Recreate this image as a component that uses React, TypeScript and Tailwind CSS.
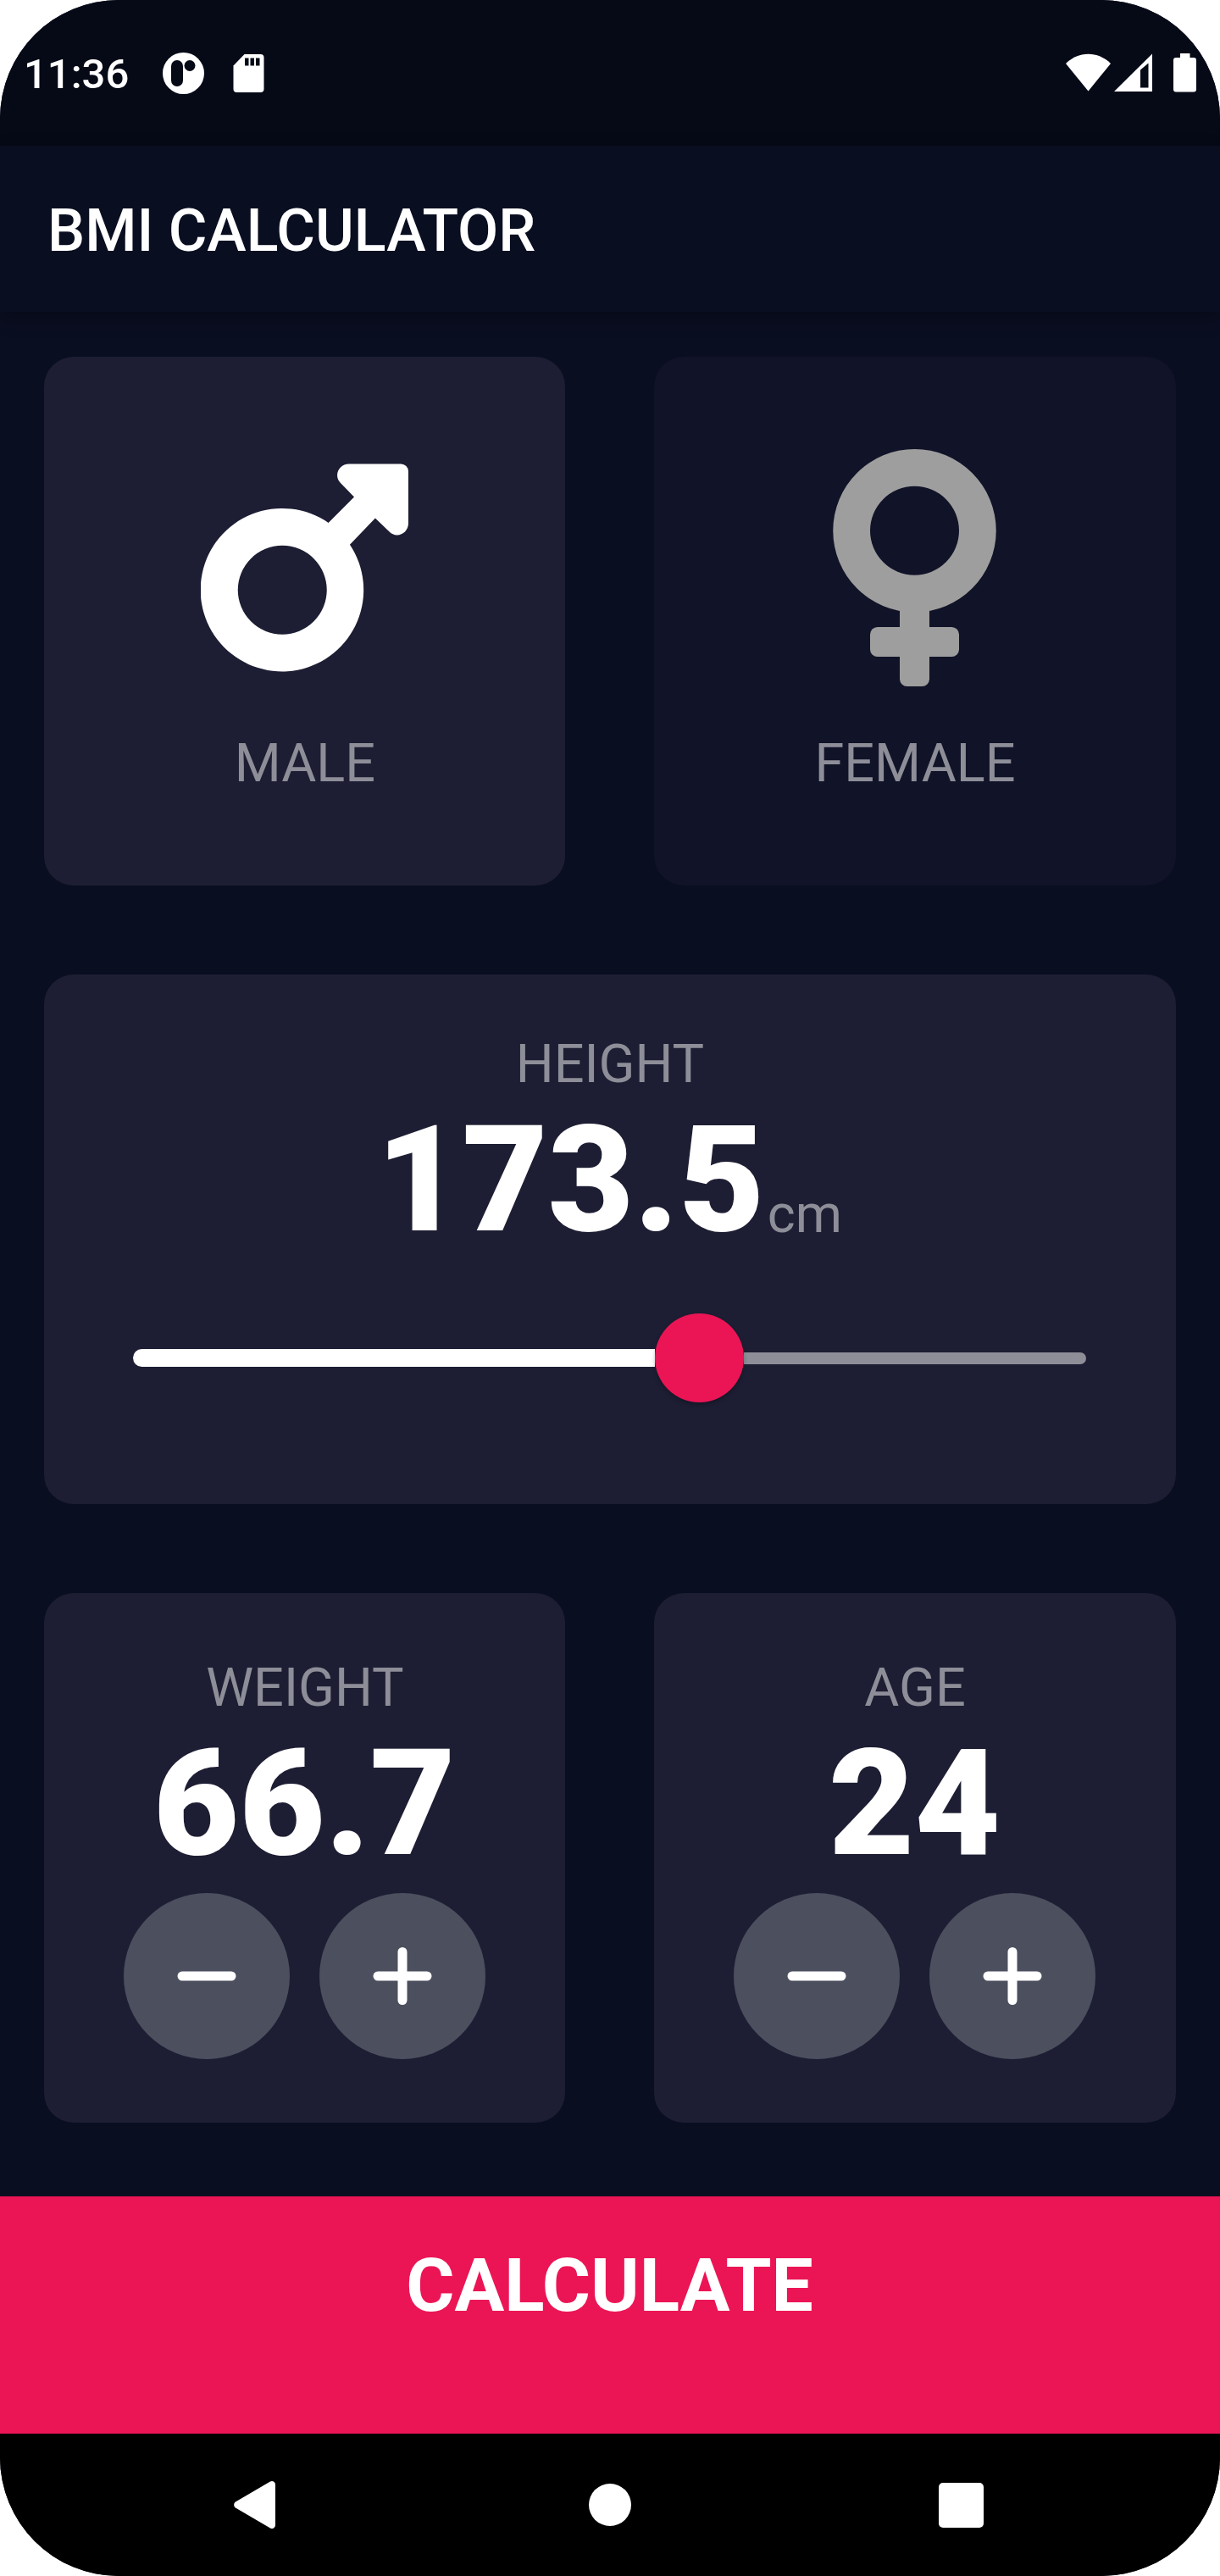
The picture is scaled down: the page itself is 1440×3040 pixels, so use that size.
import React, { useState } from "react";

const label = "text-[63px] leading-[74px] text-[#8d8e98] whitespace-nowrap";
const number = "text-[175px] leading-[205px] font-black text-white whitespace-nowrap";

function MaleIcon() {
  return (
    <svg className="h-[280px] w-[245px]" viewBox="0 -32 448 512" fill="currentColor">
      <path d="M320 0H432a16 16 0 0 1 16 16V128c0 14.4-11 25.5-24.5 25.5-6.5 0-12-2.8-16.5-7.2L376.5 117 321.7 174A176 176 0 1 1 275.4 127L331 71.500 301.700 41c-4.400-4.500-7.200-10-7.200-16.500C294.500 11 305.600 0 320 0ZM176 176a96 96 0 1 0 0 192 96 96 0 1 0 0-192Z" />
    </svg>
  );
}

function FemaleIcon() {
  return (
    <svg className="h-[280px] w-[193px]" viewBox="0 0 352 512" fill="currentColor">
      <path fillRule="evenodd" d="M176 0a176 176 0 1 0 0 352 176 176 0 1 0 0-352Zm0 80a96 96 0 1 1 0 192 96 96 0 1 1 0-192Z" />
      <rect x="80" y="384" width="192" height="64" rx="16" />
      <path d="M144 330H208V496a16 16 0 0 1-16 16H160a16 16 0 0 1-16-16Z" />
    </svg>
  );
}

function StatusBar() {
  return (
    <div className="flex h-[172px] shrink-0 items-start bg-[#060a17] pl-[28px] pr-[28px] pt-[57px] text-white">
      <span className="mt-[2px] w-[164px] text-[49px] font-medium leading-[58px]">11:36</span>
      <svg className="mt-[4px] h-[50px] w-[50px]" viewBox="0 0 50 50">
        <circle cx="24.500" cy="25.500" r="24.500" fill="white" />
        <rect x="10" y="10" width="14" height="31" rx="7" fill="#060a17" />
        <circle cx="32" cy="16.500" r="6.500" fill="#060a17" />
      </svg>
      <svg className="ml-[33px] mt-[7px] h-[45px] w-[37px]" viewBox="0 0 37 45">
        <path fill="white" d="M13.500 0H32.500a4 4 0 0 1 4 4V41a4 4 0 0 1-4 4H4.500a4 4 0 0 1-4-4V13.500Z" />
        <path fill="#060a17" d="M14 4.500h4.500v9h-4.500ZM20.500 4.500h4.500v9h-4.500ZM27 4.500h4.500v9h-4.500Z" />
      </svg>
      <div className="flex-1" />
      <svg className="mt-[6px] h-[46px] w-[155px]" viewBox="1257 63 155 46" fill="white">
        <path d="M1258 75C1273 60 1296 60 1311 75L1284.500 107.500Z" />
        <path fillRule="evenodd" d="M1315 108L1360 63.500V108ZM1346 82.500V103.500H1355.500V74.500Z" />
        <path d="M1393 63H1404.500V68H1409a3 3 0 0 1 3 3V105.500a3 3 0 0 1-3 3H1388a3 3 0 0 1-3-3V71a3 3 0 0 1 3-3H1393Z" />
      </svg>
    </div>
  );
}

function GenderCard({ name, active, onClick, children }: { name: string; active: boolean; onClick: () => void; children: React.ReactNode }) {
  return (
    <button
      onClick={onClick}
      className={`flex flex-col items-center justify-center gap-[54px] rounded-[35px] pt-[2px] ${active ? "bg-[#1d1e33] text-white" : "bg-[#111328] text-[#9e9e9e]"}`}
    >
      {children}
      <span className={label}>{name}</span>
    </button>
  );
}

function RoundButton({ plus, onClick }: { plus?: boolean; onClick: () => void }) {
  return (
    <button onClick={onClick} className="flex size-[196px] items-center justify-center rounded-full bg-[#4c4f5e]">
      <svg className="size-[70px]" viewBox="0 0 70 70" fill="white">
        <rect x="0.500" y="29.500" width="69" height="11" rx="5.500" />
        {plus && <rect x="29.500" y="1" width="11" height="68" rx="5.500" />}
      </svg>
    </button>
  );
}

function CounterCard({ name, value, onStep }: { name: string; value: string; onStep: (d: number) => void }) {
  return (
    <div className="flex flex-col items-center justify-center rounded-[35px] bg-[#1d1e33] pt-[1px]">
      <div className={label}>{name}</div>
      <div className={`${number} -mt-[3px] mb-[3px] pr-[1px]`}>{value}</div>
      <div className="flex gap-[35px]">
        <RoundButton onClick={() => onStep(-1)} />
        <RoundButton plus onClick={() => onStep(1)} />
      </div>
    </div>
  );
}

export default function App() {
  const [male, setMale] = useState(true);
  const [weight, setWeight] = useState(66.7);
  const [age, setAge] = useState(24);
  return (
    <div className="h-[3040px] w-[1440px] bg-white">
      <div className="flex h-full w-full flex-col overflow-hidden rounded-[140px] bg-[#0a0e21] font-['Roboto',sans-serif]">
        <StatusBar />
        <header className="z-10 flex h-[196px] shrink-0 items-center bg-[#0a0e21] pl-[56px] pt-[4px] shadow-[0_8px_20px_rgba(0,0,0,0.3)]">
          <h1 className="text-[70px] font-medium leading-[82px] text-white">BMI CALCULATOR</h1>
        </header>
        <main className="grid h-[2224px] shrink-0 grid-rows-3 gap-[105px] pb-[87.5px] pl-[52.4px] pr-[52.5px] pt-[52.5px]">
          <div className="grid grid-cols-2 gap-[105px]">
            <GenderCard name="MALE" active={male} onClick={() => setMale(true)}>
              <MaleIcon />
            </GenderCard>
            <GenderCard name="FEMALE" active={!male} onClick={() => setMale(false)}>
              <FemaleIcon />
            </GenderCard>
          </div>
          <div className="flex flex-col items-center justify-center rounded-[35px] bg-[#1d1e33] pt-[2px]">
            <div className={label}>HEIGHT</div>
            <div className="-mt-[3px] mb-[3px] flex items-baseline pr-[2px]">
              <span className={`${number} mr-[3px]`}>173.5</span>
              <span className={`${label} translate-y-[2px]`}>cm</span>
            </div>
            <div className="flex h-[210px] w-[1125px] items-center">
              <div className="h-[21px] w-[616px] rounded-l-full bg-white" />
              <div className="z-10 size-[105px] shrink-0 rounded-full bg-[#eb1555] shadow-[0_3px_5px_rgba(0,0,0,0.25)]" />
              <div className="h-[14px] flex-1 rounded-r-full bg-[#8d8e98]" />
            </div>
          </div>
          <div className="grid grid-cols-2 gap-[105px]">
            <CounterCard name="WEIGHT" value={weight.toFixed(1)} onStep={(d) => setWeight(weight + d / 10)} />
            <CounterCard name="AGE" value={String(age)} onStep={(d) => setAge(age + d)} />
          </div>
        </main>
        <button className="flex h-[280px] shrink-0 items-start justify-center bg-[#eb1555] pr-[1px] pt-[54px] text-[87.5px] font-bold leading-[103px] text-white">
          CALCULATE
        </button>
        <nav className="flex h-[168px] shrink-0 items-center justify-between bg-black pl-[276px] pr-[279px]">
          <svg className="h-[56px] w-[49px]" viewBox="0 0 49 56" fill="white">
            <path d="M43 .600A4 4 0 0 1 49 4V52A4 4 0 0 1 43 55.400L2 31.400A4 4 0 0 1 2 24.600Z" />
          </svg>
          <div className="ml-[7px] size-[50px] rounded-full bg-white" />
          <div className="size-[53px] rounded-[5px] bg-white" />
        </nav>
      </div>
    </div>
  );
}
